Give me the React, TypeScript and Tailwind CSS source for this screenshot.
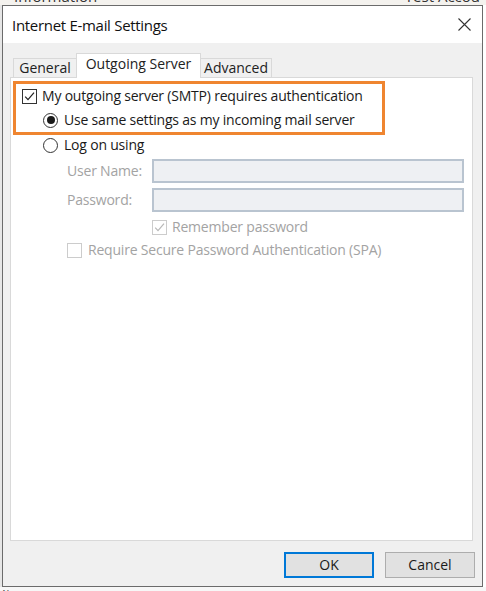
import React from "react";

function Check({ disabled = false }: { disabled?: boolean }) {
  const c = disabled ? "#b8b8b8" : "#222222";
  return (
    <svg width="13" height="13" viewBox="0 0 13 13" className="block">
      <path d="M2.2 6.6 L5 9.6 L11 2.6" fill="none" stroke={c} strokeWidth="1.2" />
    </svg>
  );
}

function CheckBox({ checked, disabled = false }: { checked: boolean; disabled?: boolean }) {
  return (
    <div
      className={
        disabled
          ? "w-[15px] h-[15px] border border-[#cccccc] bg-white flex items-center justify-center shrink-0"
          : "w-[15px] h-[15px] border border-[#333333] bg-white flex items-center justify-center shrink-0"
      }
    >
      {checked ? <Check disabled={disabled} /> : null}
    </div>
  );
}

function Radio({ checked }: { checked: boolean }) {
  return (
    <div className="w-[15px] h-[15px] rounded-full border border-[#333333] bg-white flex items-center justify-center shrink-0">
      {checked ? <div className="w-[8px] h-[8px] rounded-full bg-[#1a1a1a]" /> : null}
    </div>
  );
}

export default function App() {
  return (
    <div className="w-[486px] h-[591px] bg-white overflow-hidden flex flex-col font-['Open_Sans','Noto_Sans',sans-serif] text-[#1a1a1a]">
      {/* background top strip */}
      <div className="h-[5px] overflow-hidden flex justify-between bg-[#f4f2ee] shrink-0">
        <div className="ml-[14px] mt-[-12px] text-[15px] leading-[16px] text-[#333]">Information</div>
        <div className="mr-[6px] mt-[-12px] text-[15px] leading-[16px] text-[#333]">Test Accou</div>
      </div>
      <div className="flex h-[582px] shrink-0">
        <div className="w-[2px] bg-[#e6e6e6] shrink-0" />
        {/* dialog */}
        <div className="w-[481px] h-[582px] border-x border-b border-t border-[#6b6b6b] bg-[#f0f0f0] flex flex-col shrink-0">
          {/* title bar */}
          <div className="h-[37px] bg-white flex items-center justify-between pl-[9px] pr-[11px] shrink-0">
            <div className="text-[15px] leading-[20px] tracking-[-0.3px] text-[#111]">Internet E-mail Settings</div>
            <svg width="13" height="13" viewBox="0 0 13 13" className="block">
              <path d="M0.5 0.5 L12.5 12.5 M12.5 0.5 L0.5 12.5" stroke="#333" strokeWidth="1.1" />
            </svg>
          </div>
          {/* tabs */}
          <div className="mt-[10px] pl-[10px] flex items-end h-[24px] shrink-0 text-[14px]">
            <div className="h-[19px] w-[63px] border-t border-l border-[#d9d9d9] bg-[#f0f0f0] flex items-start justify-center leading-[18px] text-[#222]">
              General
            </div>
            <div className="h-[25px] w-[125px] mb-[-1px] border-t border-l border-r border-[#d9d9d9] bg-white flex items-start justify-center leading-[20px] text-[#222] relative z-10">
              Outgoing Server
            </div>
            <div className="h-[19px] w-[71px] border-t border-r border-[#d9d9d9] bg-[#f0f0f0] flex items-start justify-center leading-[18px] text-[#222]">
              Advanced
            </div>
          </div>
          {/* panel */}
          <div className="ml-[7px] w-[463px] h-[464px] border border-[#d9d9d9] bg-white flex flex-col shrink-0 text-[14px] tracking-[-0.2px]">
            {/* highlighted box */}
            <div className="ml-[2px] mt-[3px] w-[372px] h-[54px] border-[3px] border-[#ef8530] flex flex-col shrink-0">
              <div className="h-[24px] flex items-center pl-[6px] gap-[5px]">
                <CheckBox checked />
                <span className="leading-[20px]">My outgoing server (SMTP) requires authentication</span>
              </div>
              <div className="h-[24px] flex items-center pl-[27px] gap-[6px]">
                <Radio checked />
                <span className="leading-[20px]">Use same settings as my incoming mail server</span>
              </div>
            </div>
            <div className="h-[20px] flex items-center pl-[32px] gap-[6px] shrink-0">
              <Radio checked={false} />
              <span className="leading-[20px]">Log on using</span>
            </div>
            <div className="mt-[4px] h-[24px] flex items-center pl-[56px] shrink-0">
              <span className="w-[85px] text-[#a3a3a3] leading-[20px]">User Name:</span>
              <div className="w-[312px] h-[24px] border-2 border-[#b9c4d0] bg-[#eef0f3]" />
            </div>
            <div className="mt-[5px] h-[24px] flex items-center pl-[56px] shrink-0">
              <span className="w-[85px] text-[#a3a3a3] leading-[20px]">Password:</span>
              <div className="w-[312px] h-[24px] border-2 border-[#b9c4d0] bg-[#eef0f3]" />
            </div>
            <div className="mt-[7px] h-[16px] flex items-center pl-[141px] gap-[5px] shrink-0">
              <CheckBox checked disabled />
              <span className="text-[#a3a3a3] leading-[20px]">Remember password</span>
            </div>
            <div className="mt-[7px] h-[16px] flex items-center pl-[56px] gap-[6px] shrink-0">
              <CheckBox checked={false} disabled />
              <span className="text-[#a3a3a3] leading-[20px]">Require Secure Password Authentication (SPA)</span>
            </div>
          </div>
          {/* buttons */}
          <div className="mt-[11px] flex justify-end pr-[7px] gap-[11px] shrink-0 text-[14px]">
            <div className="w-[90px] h-[26px] border-2 border-[#0078d7] bg-[#e1e1e1] flex items-center justify-center leading-[20px]">
              OK
            </div>
            <div className="w-[90px] h-[26px] border border-[#adadad] bg-[#e1e1e1] flex items-center justify-center leading-[20px]">
              Cancel
            </div>
          </div>
        </div>
        <div className="flex-1 bg-white" />
      </div>
      <div className="flex-1 overflow-hidden bg-[#f7f7f7]">
        <div className="ml-[2px] mt-[-1px] text-[15px] leading-[16px] text-[#444]">itor</div>
      </div>
    </div>
  );
}
